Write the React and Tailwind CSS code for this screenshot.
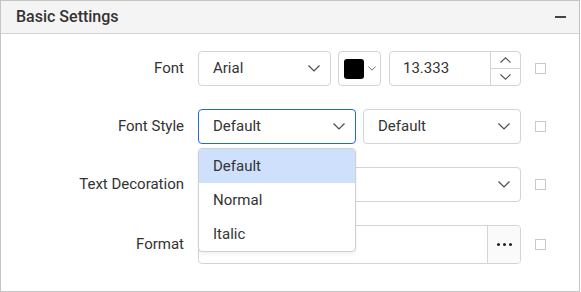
import { useState } from 'react'

const Chevron = ({ className = 'w-[12px] h-[7px]' }) => (
  <svg className={className} viewBox="0 0 12 7" fill="none">
    <path d="M0.5 0.5 L6 6 L11.5 0.5" stroke="#4b4b4b" strokeWidth="1.2" />
  </svg>
)

function Select({ value, className = '', focused = false }) {
  return (
    <div
      className={`flex h-[35px] items-center justify-between rounded-[4px] border bg-white pl-[14px] pr-[10px] ${focused ? 'border-[#2468e0]' : 'border-[#d4d4d4]'} ${className}`}
    >
      <span className="text-[15px] text-[#333]">{value}</span>
      <Chevron />
    </div>
  )
}

function Row({ label, children, tall = false }) {
  return (
    <div className={`flex items-center ${tall ? 'h-[39px]' : 'h-[35px]'}`}>
      <div className="w-[183px] text-right text-[15px] text-[#333]">{label}</div>
      <div className="ml-[14px] flex w-[323px] items-center">{children}</div>
      <div className="ml-[14px] h-[11px] w-[11px] border border-[#c9c9c9] bg-white" />
    </div>
  )
}

export default function App() {
  const [open] = useState(true)
  const options = ['Default', 'Normal', 'Italic']

  return (
    <div className="h-[292px] w-[580px] border border-[#c4c4c4] bg-white font-['Roboto',sans-serif]">
      <div className="flex h-[33px] items-center justify-between border-b border-[#d2d2d2] bg-[#f4f4f4] pl-[15px] pr-[13px]">
        <span className="text-[16px] font-medium text-[#333]">Basic Settings</span>
        <span className="h-[2px] w-[11px] bg-[#444]" />
      </div>

      <div className="flex flex-col gap-[23px] pt-[17px]">
        <Row label="Font">
          <Select value="Arial" className="w-[133px]" />
          <div className="ml-[7px] flex h-[35px] w-[43px] items-center rounded-[4px] border border-[#d4d4d4] bg-white pl-[5px]">
            <div className="h-[20px] w-[20px] rounded-[3px] bg-black" />
            <Chevron className="ml-[4px] h-[5px] w-[8px]" />
          </div>
          <div className="ml-[8px] flex h-[35px] w-[132px] overflow-hidden rounded-[4px] border border-[#d4d4d4] bg-white">
            <div className="flex flex-1 items-center pl-[13px] text-[15px] text-[#333]">13.333</div>
            <div className="flex w-[30px] flex-col border-l border-[#d4d4d4]">
              <div className="flex flex-1 items-center justify-center border-b border-[#d4d4d4]">
                <svg className="h-[6px] w-[11px]" viewBox="0 0 11 6" fill="none">
                  <path d="M0.5 5.5 L5.5 0.8 L10.5 5.5" stroke="#555" strokeWidth="1.1" />
                </svg>
              </div>
              <div className="flex flex-1 items-center justify-center">
                <svg className="h-[6px] w-[11px]" viewBox="0 0 11 6" fill="none">
                  <path d="M0.5 0.5 L5.5 5.2 L10.5 0.5" stroke="#555" strokeWidth="1.1" />
                </svg>
              </div>
            </div>
          </div>
        </Row>

        <Row label="Font Style">
          <div className="relative">
            <Select value="Default" className="w-[158px]" focused />
            {open && (
              <div className="absolute left-0 top-[39px] z-10 w-[158px] overflow-hidden rounded-[4px] border border-[#cfcfcf] bg-white shadow-[0_2px_4px_rgba(0,0,0,0.06)]">
                {options.map((o, i) => (
                  <div
                    key={o}
                    className={`flex h-[34px] items-center pl-[14px] text-[15px] text-[#333] ${i === 0 ? 'bg-[#cfe0fc]' : ''}`}
                  >
                    {o}
                  </div>
                ))}
              </div>
            )}
          </div>
          <Select value="Default" className="ml-[7px] w-[158px]" />
        </Row>

        <Row label="Text Decoration">
          <Select value="" className="w-[323px]" />
        </Row>

        <Row label="Format" tall>
          <div className="flex h-[39px] w-[323px] overflow-hidden rounded-[4px] border border-[#d4d4d4] bg-white">
            <div className="flex-1" />
            <div className="flex w-[33px] items-center justify-center gap-[3px] border-l border-[#d4d4d4] bg-[#fafafa]">
              <span className="h-[3px] w-[3px] rounded-full bg-[#222]" />
              <span className="h-[3px] w-[3px] rounded-full bg-[#222]" />
              <span className="h-[3px] w-[3px] rounded-full bg-[#222]" />
            </div>
          </div>
        </Row>
      </div>
    </div>
  )
}
